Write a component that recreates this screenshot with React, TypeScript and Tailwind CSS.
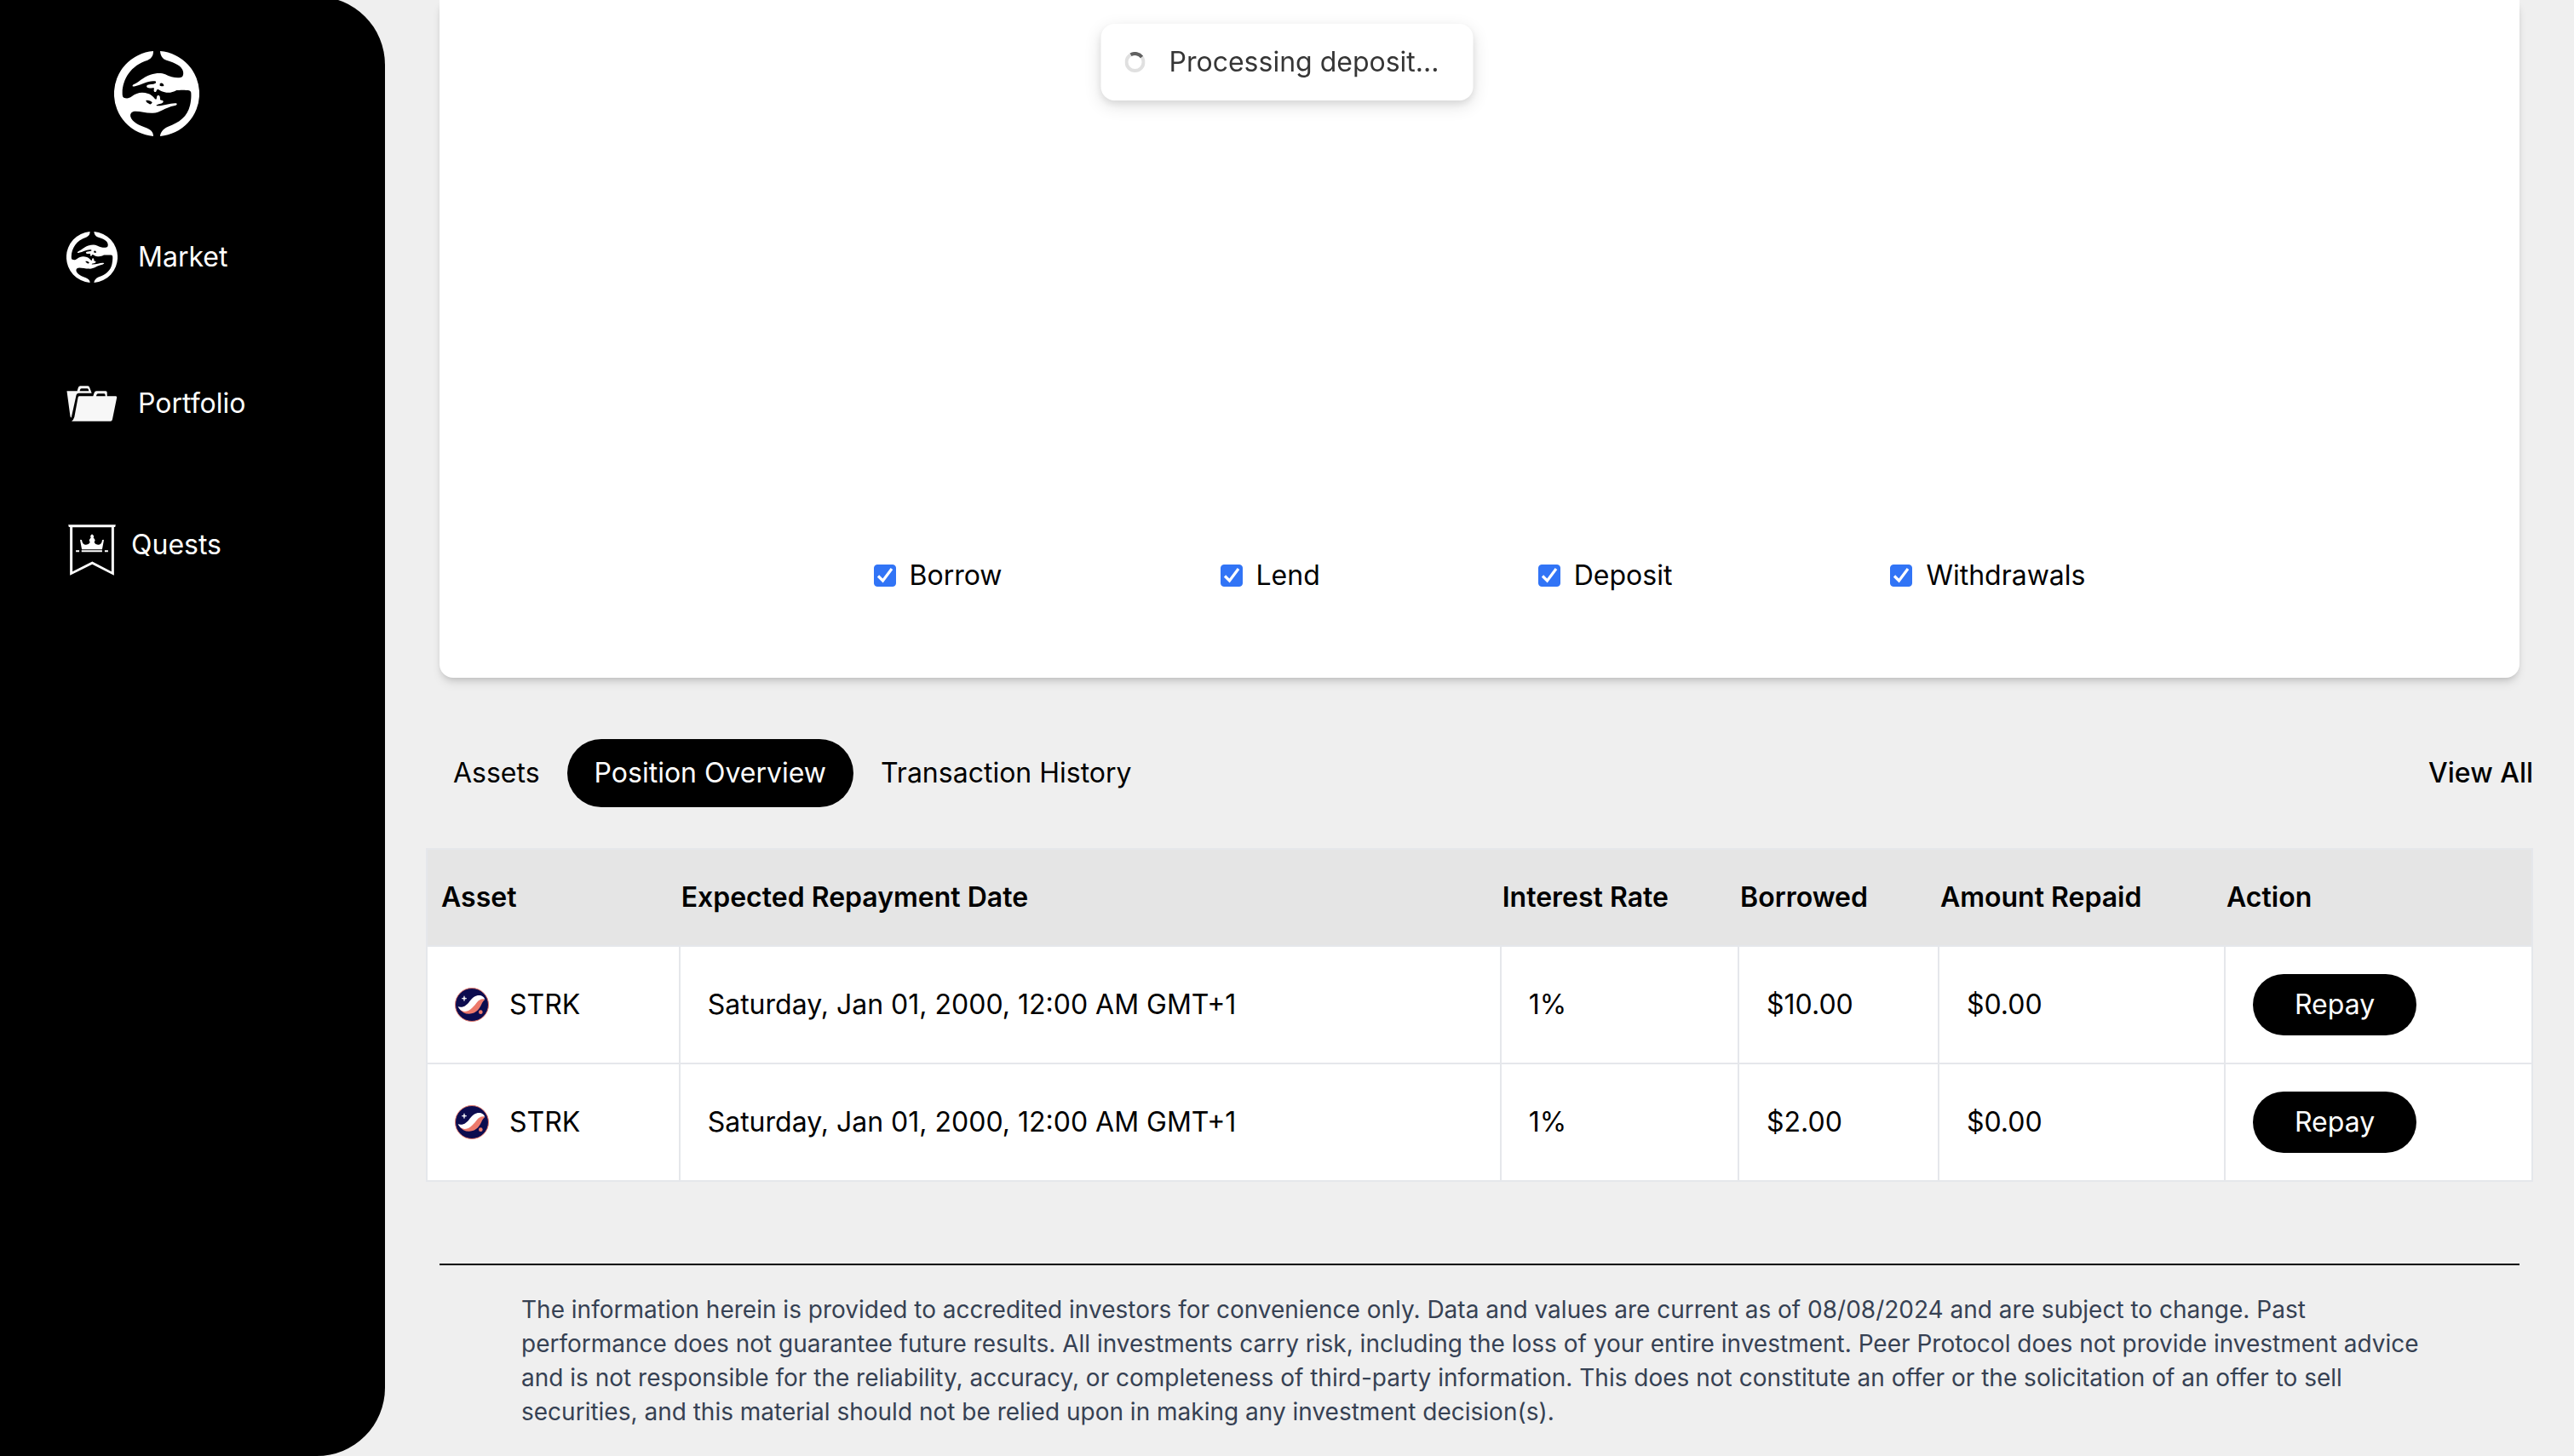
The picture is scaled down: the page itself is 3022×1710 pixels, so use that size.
import React from "react";

function HandsLogo({ className }: { className: string }) {
  return (
    <svg viewBox="42 60 300 300" className={className} fill="#fff" fillRule="evenodd" aria-hidden="true">
      <path d="M204 60A150.5 150.5 0 0 1 204 360C205 346 214 334 232 326C272 312 300 290 309 252C313 235 314 220 313 207C312 199 306 198 296 198C282 196 270 198 262 198C250 204 238 208 226 206C214 204 204 200 199 196C195 194 192 196 191 200C190 205 183 205 182 200C181 196 184 192 182 190C176 188 168 192 160 189C155 187 155 181 160 179C168 176 178 178 188 173C190 170 190 166 184 166C160 164 138 179 116 184C106 187 104 181 110 178C128 171 142 152 170 143C190 137 208 136 222 142C240 151 260 156 276 153C284 151 287 144 285 132C281 112 258 102 226 92C212 88 205 76 204 60ZM203 175C207 170 215 172 217 180C218 186 210 184 203 182Z" />
      <path d="M180 60A150.5 150.5 0 0 0 180 360C180 348 174 338 156 331C130 322 106 310 100 292C97 280 104 272 118 272C136 272 152 278 174 278C204 280 216 260 256 252C265 250 266 243 256 244C236 244 216 254 192 253C190 252 190 249 196 248C206 246 216 244 215 237C214 232 206 234 204 231C204 224 204 216 197 216C190 217 194 226 190 230C184 230 180 216 162 210C140 203 122 206 104 220C94 228 84 227 76 224C71 220 71 214 71 206C72 160 100 110 160 92C174 86 180 76 180 60ZM154 234C162 232 172 236 176 241C174 246 170 249 167 247C160 243 154 240 154 234Z" />
    </svg>
  );
}

function FolderIcon() {
  return (
    <svg viewBox="54 68 180 128" className="h-[42px] w-[60px]" fill="#f7f7f7" aria-hidden="true">
      <path d="M54 87H91L95 74Q97 69 102 69H128Q133 69 135 73L143 95H97Q90 95 88 101L70 182Q67 182 66 176ZM100 87H133L131 81Q130 78 127 78H107Q103 78 102 81Z" fillRule="evenodd" />
      <path d="M98 105H148L152 93Q154 87 160 87H193Q198 87 198 92V105H229Q234 105 233 110L217 188Q216 195 210 195H71Q78 190 81 180L94 110Q95 105 98 105ZM159 105H192L191 99Q190 96 187 96H167Q162 96 161 99Z" fillRule="evenodd" />
    </svg>
  );
}

function QuestIcon() {
  return (
    <svg viewBox="60 557 168 181" className="h-[60px] w-14" fill="#fff" aria-hidden="true">
      <path d="M60 558H228L226 566H222V737L145 698L66 737V566H62ZM75 567V724L145 688L213 724V567Z" fillRule="evenodd" />
      <path d="M108 645L102 613Q103 608 108 612Q110 625 117 628Q130 632 137 620L134 612L140 603L138 598L144 591L151 598L149 603L155 612L152 620Q158 632 171 628Q179 625 180 612Q185 608 186 613L180 645Z" />
      <path d="M87 648H99V654H87ZM107 648H180V654H107ZM189 648H201V654H189Z" />
    </svg>
  );
}

function StrkIcon() {
  return (
    <svg viewBox="0 0 120 120" className="size-10" aria-hidden="true">
      <circle cx="60" cy="60" r="58.5" fill="#0c0c4f" stroke="#e0776a" strokeWidth="3" />
      <path d="M16 74Q28 92 50 92C78 91 88 72 96 54Q100 46 106 42L96 36L40 74Z" fill="#ec796b" />
      <path d="M11 67C30 72 42 62 52 48C64 31 76 25 90 27Q102 30 106 41C94 38 86 42 76 54C62 72 50 84 34 84Q18 82 11 67Z" fill="#fff" />
      <path d="M33 29L35 36L42 38L35 40L33 47L31 40L24 38L31 36Z" fill="#fff" stroke="#fff" strokeWidth="1.5" />
      <circle cx="91" cy="86" r="7" fill="#ec796b" />
    </svg>
  );
}

const filters = ["Borrow", "Lend", "Deposit", "Withdrawals"];
const columns = [
  { label: "Asset", width: "w-[12%]" },
  { label: "Expected Repayment Date", width: "w-[39%]" },
  { label: "Interest Rate", width: "w-[11.3%]" },
  { label: "Borrowed", width: "w-[9.5%]" },
  { label: "Amount Repaid", width: "w-[13.6%]" },
  { label: "Action", width: "w-[14.6%]" },
];
const positions = [
  { asset: "STRK", date: "Saturday, Jan 01, 2000, 12:00 AM GMT+1", rate: "1%", borrowed: "$10.00", repaid: "$0.00" },
  { asset: "STRK", date: "Saturday, Jan 01, 2000, 12:00 AM GMT+1", rate: "1%", borrowed: "$2.00", repaid: "$0.00" },
];

function Sidebar() {
  return (
    <aside className="-mt-1 w-[452px] shrink-0 rounded-r-[80px] bg-black pt-16 text-white">
      <a href="#home" aria-label="Home" className="ml-[134px] block w-[100px]">
        <HandsLogo className="size-[100px]" />
      </a>
      <nav className="mt-28 flex flex-col pl-[78px]">
        <a href="#market" className="flex items-center gap-6">
          <HandsLogo className="size-[60px]" />
          <span>Market</span>
        </a>
        <a href="#portfolio" className="mt-[118px] flex items-center gap-6">
          <FolderIcon />
          <span>Portfolio</span>
        </a>
        <a href="#quests" className="mt-[118px] flex items-start gap-[18px] pl-0.5">
          <QuestIcon />
          <span>Quests</span>
        </a>
      </nav>
    </aside>
  );
}

function PositionsTable() {
  return (
    <table className="mt-12 w-full table-fixed border-collapse border-2 border-gray-200 bg-white text-left">
      <thead>
        <tr className="border-2 border-gray-200 bg-[#e5e5e5]">
          {columns.map((c) => (
            <th key={c.label} scope="col" className={`py-8 pl-0.5 font-semibold first:pl-4 ${c.width}`}>
              {c.label}
            </th>
          ))}
        </tr>
      </thead>
      <tbody>
        {positions.map((p, i) => (
          <tr key={i}>
            <td className="border-2 border-gray-200 px-8">
              <div className="flex items-center gap-6">
                <StrkIcon />
                <span>{p.asset}</span>
              </div>
            </td>
            <td className="border-2 border-gray-200 px-8">{p.date}</td>
            <td className="border-2 border-gray-200 px-8">{p.rate}</td>
            <td className="border-2 border-gray-200 px-8">{p.borrowed}</td>
            <td className="border-2 border-gray-200 px-8">{p.repaid}</td>
            <td className="border-2 border-gray-200 p-8">
              <button type="button" className="block h-[72px] w-48 rounded-full bg-black text-white">
                Repay
              </button>
            </td>
          </tr>
        ))}
      </tbody>
    </table>
  );
}

function Toast() {
  return (
    <div
      role="status"
      className="fixed top-7 left-1/2 flex -translate-x-1/2 items-center rounded-2xl bg-white px-7 py-[21px] text-[#363636] shadow-[0_6px_20px_rgba(0,0,0,0.12),0_4px_8px_rgba(0,0,0,0.08)]"
    >
      <svg viewBox="0 0 24 24" className="size-6" fill="none" strokeWidth="4" aria-hidden="true">
        <circle cx="12" cy="12" r="10" stroke="#e0e0e0" />
        <path d="M7 3.3A10 10 0 0 1 20 6" stroke="#616161" />
      </svg>
      <span className="pr-3 pl-7 whitespace-nowrap">Processing deposit...</span>
    </div>
  );
}

export default function App() {
  return (
    <div className="flex min-h-screen bg-[#efefef] font-[Inter,sans-serif] text-[32px] leading-[48px] text-black">
      <Sidebar />
      <main className="flex min-w-0 grow flex-col px-12">
        <section className="mx-4 flex h-[796px] items-end justify-center gap-64 rounded-b-2xl bg-white pb-24 shadow-[0_8px_12px_-2px_rgba(0,0,0,0.1),0_4px_8px_-4px_rgba(0,0,0,0.2)]">
          {filters.map((f) => (
            <label key={f} className="flex items-center gap-4">
              <span className="grid size-[26px] place-items-center">
                <input
                  type="checkbox"
                  defaultChecked
                  className="col-start-1 row-start-1 size-[26px] appearance-none rounded-[4px] border border-gray-500 bg-white checked:border-[#3174f6] checked:bg-[#3174f6]"
                />
                <svg viewBox="0 0 26 26" className="pointer-events-none col-start-1 row-start-1 size-[26px]" fill="none" stroke="#fff" strokeWidth="3.2" aria-hidden="true">
                  <path d="M5 13.5L10.5 19L21 5" />
                </svg>
              </span>
              <span>{f}</span>
            </label>
          ))}
        </section>

        <div className="mt-[72px] flex items-center justify-between">
          <div className="flex">
            <button type="button" className="h-20 rounded-full px-8">Assets</button>
            <button type="button" className="h-20 rounded-full bg-black px-8 text-white">Position Overview</button>
            <button type="button" className="h-20 rounded-full px-8">Transaction History</button>
          </div>
          <a href="#all" className="font-medium">View All</a>
        </div>

        <PositionsTable />

        <footer className="mx-4 mt-24 border-t-2 border-black px-24 py-8 text-[28px] leading-10 text-gray-700">
          <p>
            The information herein is provided to accredited investors for convenience only. Data and values are current
            as of 08/08/2024 and are subject to change. Past performance does not guarantee future results. All
            investments carry risk, including the loss of your entire investment. Peer Protocol does not provide
            investment advice and is not responsible for the reliability, accuracy, or completeness of third-party
            information. This does not constitute an offer or the solicitation of an offer to sell securities, and this
            material should not be relied upon in making any investment decision(s).
          </p>
        </footer>
      </main>
      <Toast />
    </div>
  );
}
